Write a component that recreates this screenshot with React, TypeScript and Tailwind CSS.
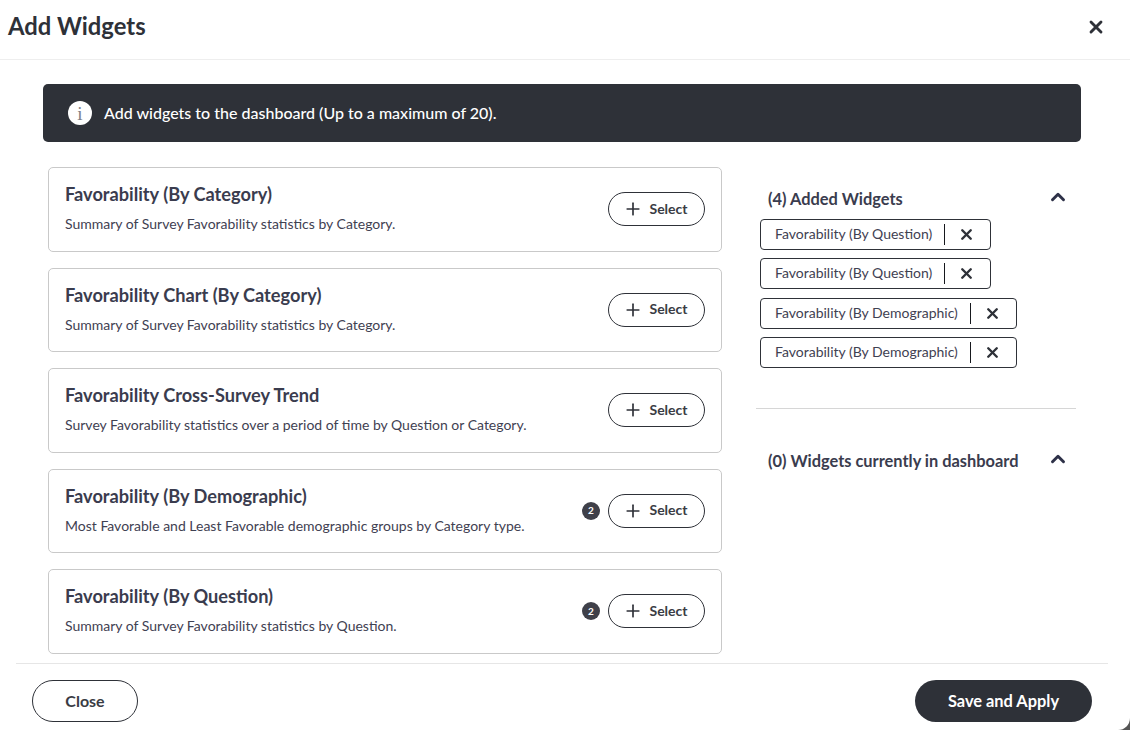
import { Plus, X, ChevronUp } from "lucide-react";

const widgets = [
  { title: "Favorability (By Category)", text: "Summary of Survey Favorability statistics by Category.", count: 0 },
  { title: "Favorability Chart (By Category)", text: "Summary of Survey Favorability statistics by Category.", count: 0 },
  { title: "Favorability Cross-Survey Trend", text: "Survey Favorability statistics over a period of time by Question or Category.", count: 0 },
  { title: "Favorability (By Demographic)", text: "Most Favorable and Least Favorable demographic groups by Category type.", count: 2 },
  { title: "Favorability (By Question)", text: "Summary of Survey Favorability statistics by Question.", count: 2 },
];

const added = [
  "Favorability (By Question)",
  "Favorability (By Question)",
  "Favorability (By Demographic)",
  "Favorability (By Demographic)",
];

function WidgetCard({ title, text, count }: { title: string; text: string; count: number }) {
  return (
    <div className="h-[84.5px] flex items-center justify-between border border-[#c9c9c9] rounded-[5px] pl-4 pr-4 bg-white">
      <div className="pb-[2px]">
        <h3 className="text-[18.2px] leading-[22px] font-bold text-[#3a3c4e]">{title}</h3>
        <p className="text-[14px] leading-[18px] mt-[10px] text-[#3f4152]">{text}</p>
      </div>
      <div className="flex items-center gap-2">
        {count > 0 && (
          <span className="w-[18px] h-[18px] rounded-full bg-[#3f4049] text-white text-[10px] font-bold flex items-center justify-center">
            {count}
          </span>
        )}
        <button className="w-[97px] h-[34px] rounded-full border border-[#2e3138] flex items-center justify-center gap-2 text-[14px] font-bold text-[#3a3c44]">
          <Plus className="w-[20px] h-[20px] -mx-[2px] text-[#2e3138]" strokeWidth={2} />
          <span className="pb-[2px]">Select</span>
        </button>
      </div>
    </div>
  );
}

function Chip({ label }: { label: string }) {
  return (
    <div className="h-[31px] w-fit flex items-center border border-[#2e3138] rounded-[4px] pl-[14px] text-[14px] text-[#3f4152]">
      <span className="pb-[2px]">{label}</span>
      <span className="w-px h-[21px] bg-[#16181d] ml-3" />
      <X className="w-[17px] h-[17px] ml-[13px] mr-[15px] text-[#2e3138]" strokeWidth={3.4} />
    </div>
  );
}

function SectionHead({ label }: { label: string }) {
  return (
    <div className="flex items-center justify-between pl-3 pr-[7px]">
      <h4 className="text-[16.4px] leading-5 font-bold text-[#3a3c4e]">{label}</h4>
      <ChevronUp className="w-[22px] h-[22px] text-[#2e3148] -mt-[4px]" strokeWidth={3.2} />
    </div>
  );
}

export default function App() {
  return (
    <div className="w-[1130px] h-[730px] overflow-hidden bg-[#555555]">
      <div className="w-full h-full overflow-hidden bg-white rounded-br-[12px] flex flex-col font-['Lato','Inter',sans-serif]">
        {/* Header */}
        <div className="h-[60px] flex-none flex items-center justify-between border-b border-[#eeeeee] pl-2 pr-6">
          <h1 className="text-[23.8px] leading-8 font-bold text-[#2e3138] -mt-[8px]">Add Widgets</h1>
          <X className="w-5 h-5 -mt-[5px] text-[#2e3138]" strokeWidth={3.4} />
        </div>

        {/* Body */}
        <div className="flex-1 min-h-0 px-[43px] pt-6">
          <div className="w-[1038px] h-[58px] flex items-center gap-3 rounded-[5px] bg-[#2e3138] pl-[25px] text-white text-[16px] font-medium">
            <span className="w-6 h-6 rounded-full bg-white text-[#7c7e85] text-[19px] leading-none flex items-center justify-center font-['Liberation_Serif',serif]">
              i
            </span>
            Add widgets to the dashboard (Up to a maximum of 20).
          </div>

          <div className="flex mt-[25px]">
            <div className="ml-[5px] w-[674px] flex flex-col gap-4">
              {widgets.map((w) => (
                <WidgetCard key={w.title} {...w} />
              ))}
            </div>

            <div className="ml-[34px] w-[320px] pt-[22px]">
              <SectionHead label="(4) Added Widgets" />
              <div className="flex flex-col gap-[8.4px] mt-[10px] ml-1">
                {added.map((a, i) => (
                  <Chip key={i} label={a} />
                ))}
              </div>
              <div className="border-t border-[#d6d6d6] mt-[40px] mb-[42px]" />
              <SectionHead label="(0) Widgets currently in dashboard" />
            </div>
          </div>
        </div>

        {/* Footer */}
        <div className="h-[67px] flex-none ml-4 mr-[22px] border-t border-[#e6e6e6] flex justify-between px-4 pt-4">
          <button className="w-[106px] h-[42px] rounded-full border border-[#2e3138] text-[16px] font-bold text-[#3a3c44]">
            Close
          </button>
          <button className="w-[177px] h-[42px] rounded-full bg-[#2e3138] text-white text-[16.4px] font-bold">
            Save and Apply
          </button>
        </div>
      </div>
    </div>
  );
}
